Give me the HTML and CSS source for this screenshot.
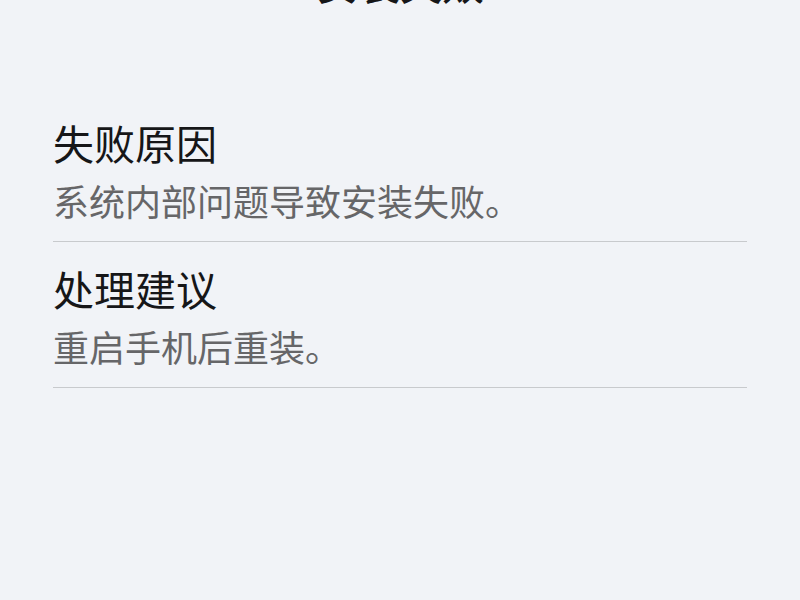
FILE: index.html
```html
<!DOCTYPE html>
<html lang="zh-CN">
<head>
  <meta charset="UTF-8" />
  <meta name="viewport" content="width=device-width, initial-scale=1.0" />
  <title>安装失败</title>
  <link rel="stylesheet" href="styles.css">
</head>
<body>
  <header class="page-header">
    <h1>安装失败</h1>
  </header>
  <main class="details">
    <section class="detail">
      <h2>失败原因</h2>
      <p>系统内部问题导致安装失败。</p>
    </section>
    <section class="detail">
      <h2>处理建议</h2>
      <p>重启手机后重装。</p>
    </section>
  </main>
</body>
</html>
```

FILE: styles.css
```css
body {
  margin: 0;
  background-color: #f1f3f7;
  color: #161618;
  font-family: "Noto Sans CJK SC", sans-serif;
}
/* title is scrolled mostly past the top edge */
.page-header {
  margin-top: -46px;
  text-align: center;
}
h1 {
  margin: 0;
  font-size: 42px;
  font-weight: 500;
  line-height: 56px;
}
.details {
  margin: 86px 53px 0;
}
.detail {
  padding: 20px 0 15px;
  border-bottom: 1px solid #c8cacd;
}
h2 {
  margin: 0;
  font-size: 41px;
  font-weight: 400;
  line-height: 52px;
}
p {
  margin: 6px 0 0;
  color: #666668;
  font-size: 36px;
  font-weight: 400;
  line-height: 52px;
}
```
